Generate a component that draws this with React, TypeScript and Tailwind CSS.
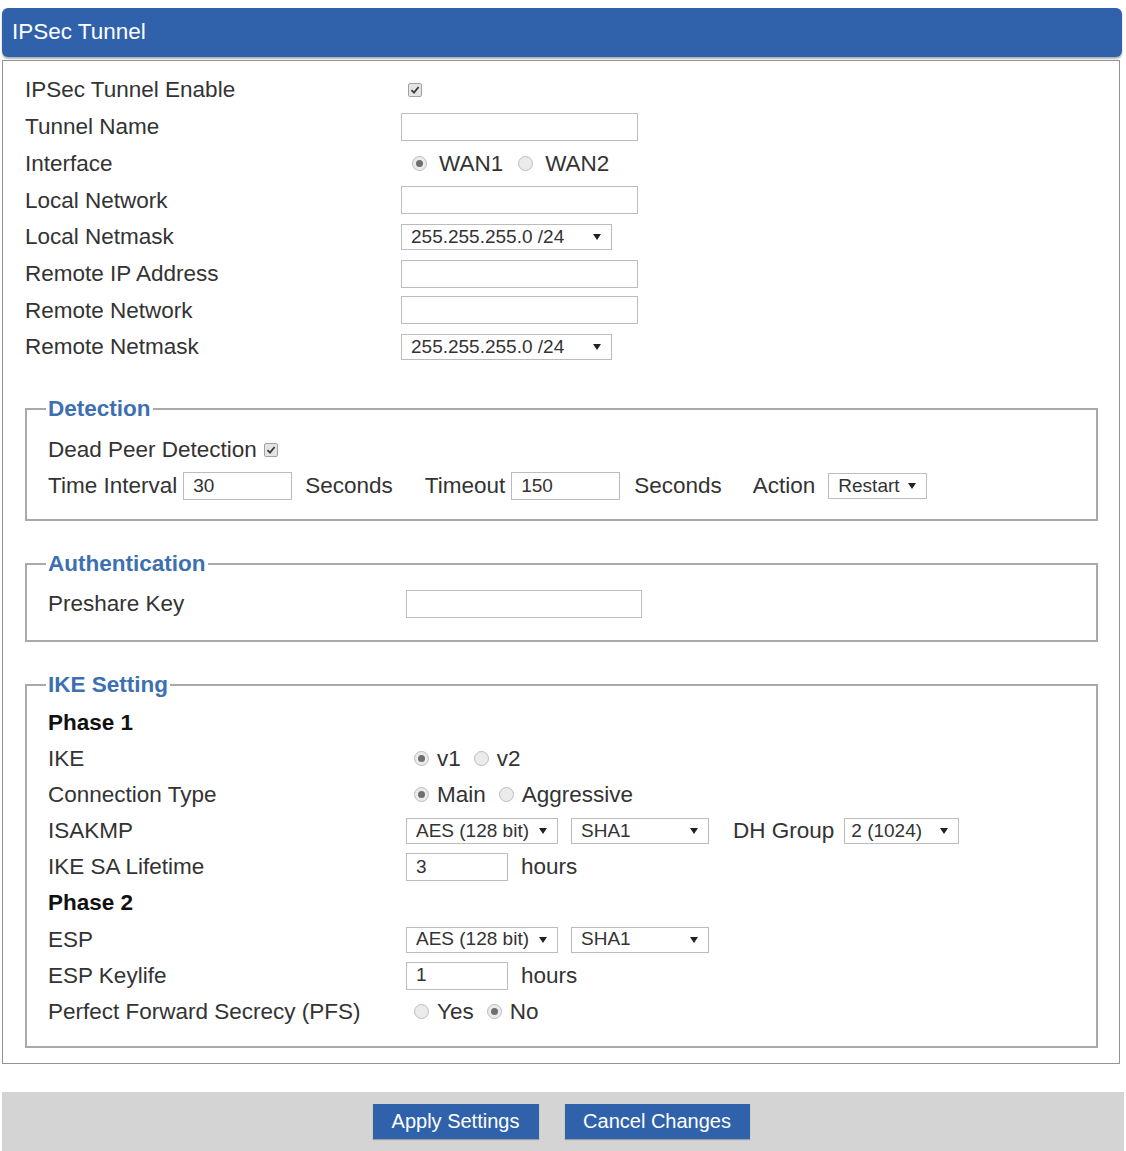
import React from "react";

const FONT = "font-['Liberation_Sans',Arial,Helvetica,sans-serif]";

function Checkbox({ className = "" }: { className?: string }) {
  return (
    <span
      className={`inline-flex items-center justify-center w-[14px] h-[14px] rounded-[2px] border border-[#a3a3a3] bg-[#e4e4e4] ${className}`}
    >
      <svg width="10" height="10" viewBox="0 0 10 10">
        <path d="M1.5 5.2 L4 7.6 L8.6 2" fill="none" stroke="#3a3a3a" strokeWidth="1.8" />
      </svg>
    </span>
  );
}

function Radio({ checked = false }: { checked?: boolean }) {
  return (
    <span className="inline-flex items-center justify-center w-[15px] h-[15px] rounded-full border border-[#bdbdbd] bg-[#ebebeb] shrink-0">
      {checked && <span className="w-[7px] h-[7px] rounded-full bg-[#6f6f6f]" />}
    </span>
  );
}

function Arrow() {
  return (
    <svg width="8" height="6" viewBox="0 0 8 6" className="shrink-0">
      <path d="M0 0 H8 L4 6 Z" fill="#222" />
    </svg>
  );
}

function TextBox({ w, value = "", className = "" }: { w: string; value?: string; className?: string }) {
  return (
    <span
      className={`inline-flex items-center h-[28px] border border-[#bcbcbc] bg-white pl-[9px] text-[19px] text-[#333] ${w} ${className}`}
    >
      {value}
    </span>
  );
}

function Select({ w, value, className = "" }: { w: string; value: string; className?: string }) {
  return (
    <span
      className={`inline-flex items-center justify-between h-[26px] border border-[#bcbcbc] bg-white pl-[9px] pr-[10px] text-[19px] text-[#333] ${w} ${className}`}
    >
      <span>{value}</span>
      <Arrow />
    </span>
  );
}

function RadioGroup({
  items,
  first,
  inner = "gap-[8px]",
  between = "ml-[13px]",
}: {
  items: { label: string; checked?: boolean }[];
  first: string;
  inner?: string;
  between?: string;
}) {
  return (
    <div className={`flex items-center ${first}`}>
      {items.map((it, i) => (
        <div key={it.label} className={`flex items-center ${inner} ${i > 0 ? between : ""}`}>
          <Radio checked={it.checked} />
          <span>{it.label}</span>
        </div>
      ))}
    </div>
  );
}

function MainRow({ label, children }: { label: string; children?: React.ReactNode }) {
  return (
    <div className="flex items-center h-[36.7px]">
      <div className="w-[376px] shrink-0">{label}</div>
      <div className="flex items-center">{children}</div>
    </div>
  );
}

function IkeRow({ label, bold = false, children }: { label: string; bold?: boolean; children?: React.ReactNode }) {
  return (
    <div className="flex items-center h-[36.15px]">
      <div className={`w-[358px] shrink-0 ${bold ? "font-bold text-[#111]" : ""}`}>{label}</div>
      <div className="flex items-center">{children}</div>
    </div>
  );
}

function Group({ title, className = "", children }: { title: string; className?: string; children: React.ReactNode }) {
  return (
    <fieldset className={`border-2 border-[#a9a9a9] pl-[21px] pr-[21px] ${className}`}>
      <legend className="-ml-[2px] px-[2px] leading-[26px] font-bold text-[#3d6fb1]">{title}</legend>
      {children}
    </fieldset>
  );
}

export default function App() {
  return (
    <div className={`w-[1126px] h-[1151px] bg-white overflow-hidden text-[22.5px] text-[#333] ${FONT}`}>
      <div className="pt-[8px] pl-[2px] pr-[4px]">
        {/* title bar */}
        <div className="h-[49px] rounded-[6px] bg-[#2f62aa] flex items-center pl-[10px] pb-[2px] text-white shadow-[0_2px_2px_rgba(0,0,0,0.3)]">
          IPSec Tunnel
        </div>

        {/* settings panel */}
        <div className="mt-[3px] mr-[2px] border border-[#949494] pl-[22px] pr-[21px] pt-[11px] pb-[15px]">
          <MainRow label="IPSec Tunnel Enable">
            <Checkbox className="ml-[7px]" />
          </MainRow>
          <MainRow label="Tunnel Name">
            <TextBox w="w-[237px]" />
          </MainRow>
          <MainRow label="Interface">
            <RadioGroup
              first="ml-[11px]"
              inner="gap-[12px]"
              between="ml-[15px]"
              items={[{ label: "WAN1", checked: true }, { label: "WAN2" }]}
            />
          </MainRow>
          <MainRow label="Local Network">
            <TextBox w="w-[237px]" />
          </MainRow>
          <MainRow label="Local Netmask">
            <Select w="w-[211px]" value="255.255.255.0 /24" />
          </MainRow>
          <MainRow label="Remote IP Address">
            <TextBox w="w-[237px]" />
          </MainRow>
          <MainRow label="Remote Network">
            <TextBox w="w-[237px]" />
          </MainRow>
          <MainRow label="Remote Netmask">
            <Select w="w-[211px]" value="255.255.255.0 /24" />
          </MainRow>

          <Group title="Detection" className="mt-[30px] pt-[10px] pb-[15px]">
            <div className="flex items-center h-[36.3px]">
              <span>Dead Peer Detection</span>
              <Checkbox className="ml-[7px]" />
            </div>
            <div className="flex items-center h-[36.3px]">
              <span>Time Interval</span>
              <TextBox w="w-[109px]" value="30" className="ml-[6px]" />
              <span className="ml-[13px]">Seconds</span>
              <span className="ml-[32px]">Timeout</span>
              <TextBox w="w-[109px]" value="150" className="ml-[6px]" />
              <span className="ml-[14px]">Seconds</span>
              <span className="ml-[31px]">Action</span>
              <Select w="w-[99px]" value="Restart" className="ml-[13px]" />
            </div>
          </Group>

          <Group title="Authentication" className="mt-[30px] pt-[9px] pb-[17px]">
            <div className="flex items-center h-[36.5px]">
              <div className="w-[358px] shrink-0">Preshare Key</div>
              <TextBox w="w-[236px]" />
            </div>
          </Group>

          <Group title="IKE Setting" className="mt-[30px] pt-[7px] pb-[16px]">
            <IkeRow label="Phase 1" bold />
            <IkeRow label="IKE">
              <RadioGroup first="ml-[8px]" items={[{ label: "v1", checked: true }, { label: "v2" }]} />
            </IkeRow>
            <IkeRow label="Connection Type">
              <RadioGroup first="ml-[8px]" items={[{ label: "Main", checked: true }, { label: "Aggressive" }]} />
            </IkeRow>
            <IkeRow label="ISAKMP">
              <Select w="w-[152px]" value="AES (128 bit)" />
              <Select w="w-[138px]" value="SHA1" className="ml-[13px]" />
              <span className="ml-[24px]">DH Group</span>
              <Select w="w-[115px]" value="2 (1024)" className="ml-[10px] !pl-[6px]" />
            </IkeRow>
            <IkeRow label="IKE SA Lifetime">
              <TextBox w="w-[102px]" value="3" />
              <span className="ml-[13px]">hours</span>
            </IkeRow>
            <IkeRow label="Phase 2" bold />
            <IkeRow label="ESP">
              <Select w="w-[152px]" value="AES (128 bit)" />
              <Select w="w-[138px]" value="SHA1" className="ml-[13px]" />
            </IkeRow>
            <IkeRow label="ESP Keylife">
              <TextBox w="w-[102px]" value="1" />
              <span className="ml-[13px]">hours</span>
            </IkeRow>
            <IkeRow label="Perfect Forward Secrecy (PFS)">
              <RadioGroup first="ml-[8px]" items={[{ label: "Yes" }, { label: "No", checked: true }]} />
            </IkeRow>
          </Group>
        </div>
      </div>

      {/* action bar */}
      <div className="mt-[28px] ml-[2px] w-[1122px] h-[60px] bg-[#d4d4d4] flex justify-center gap-[26px] pt-[12px] pr-[4px]">
        <button className="h-[35px] w-[166px] bg-[#2f62aa] text-white text-[20px] shadow-[0_1px_1px_rgba(0,0,0,0.25)]">
          Apply Settings
        </button>
        <button className="h-[35px] w-[185px] bg-[#2f62aa] text-white text-[20px] shadow-[0_1px_1px_rgba(0,0,0,0.25)]">
          Cancel Changes
        </button>
      </div>
    </div>
  );
}
